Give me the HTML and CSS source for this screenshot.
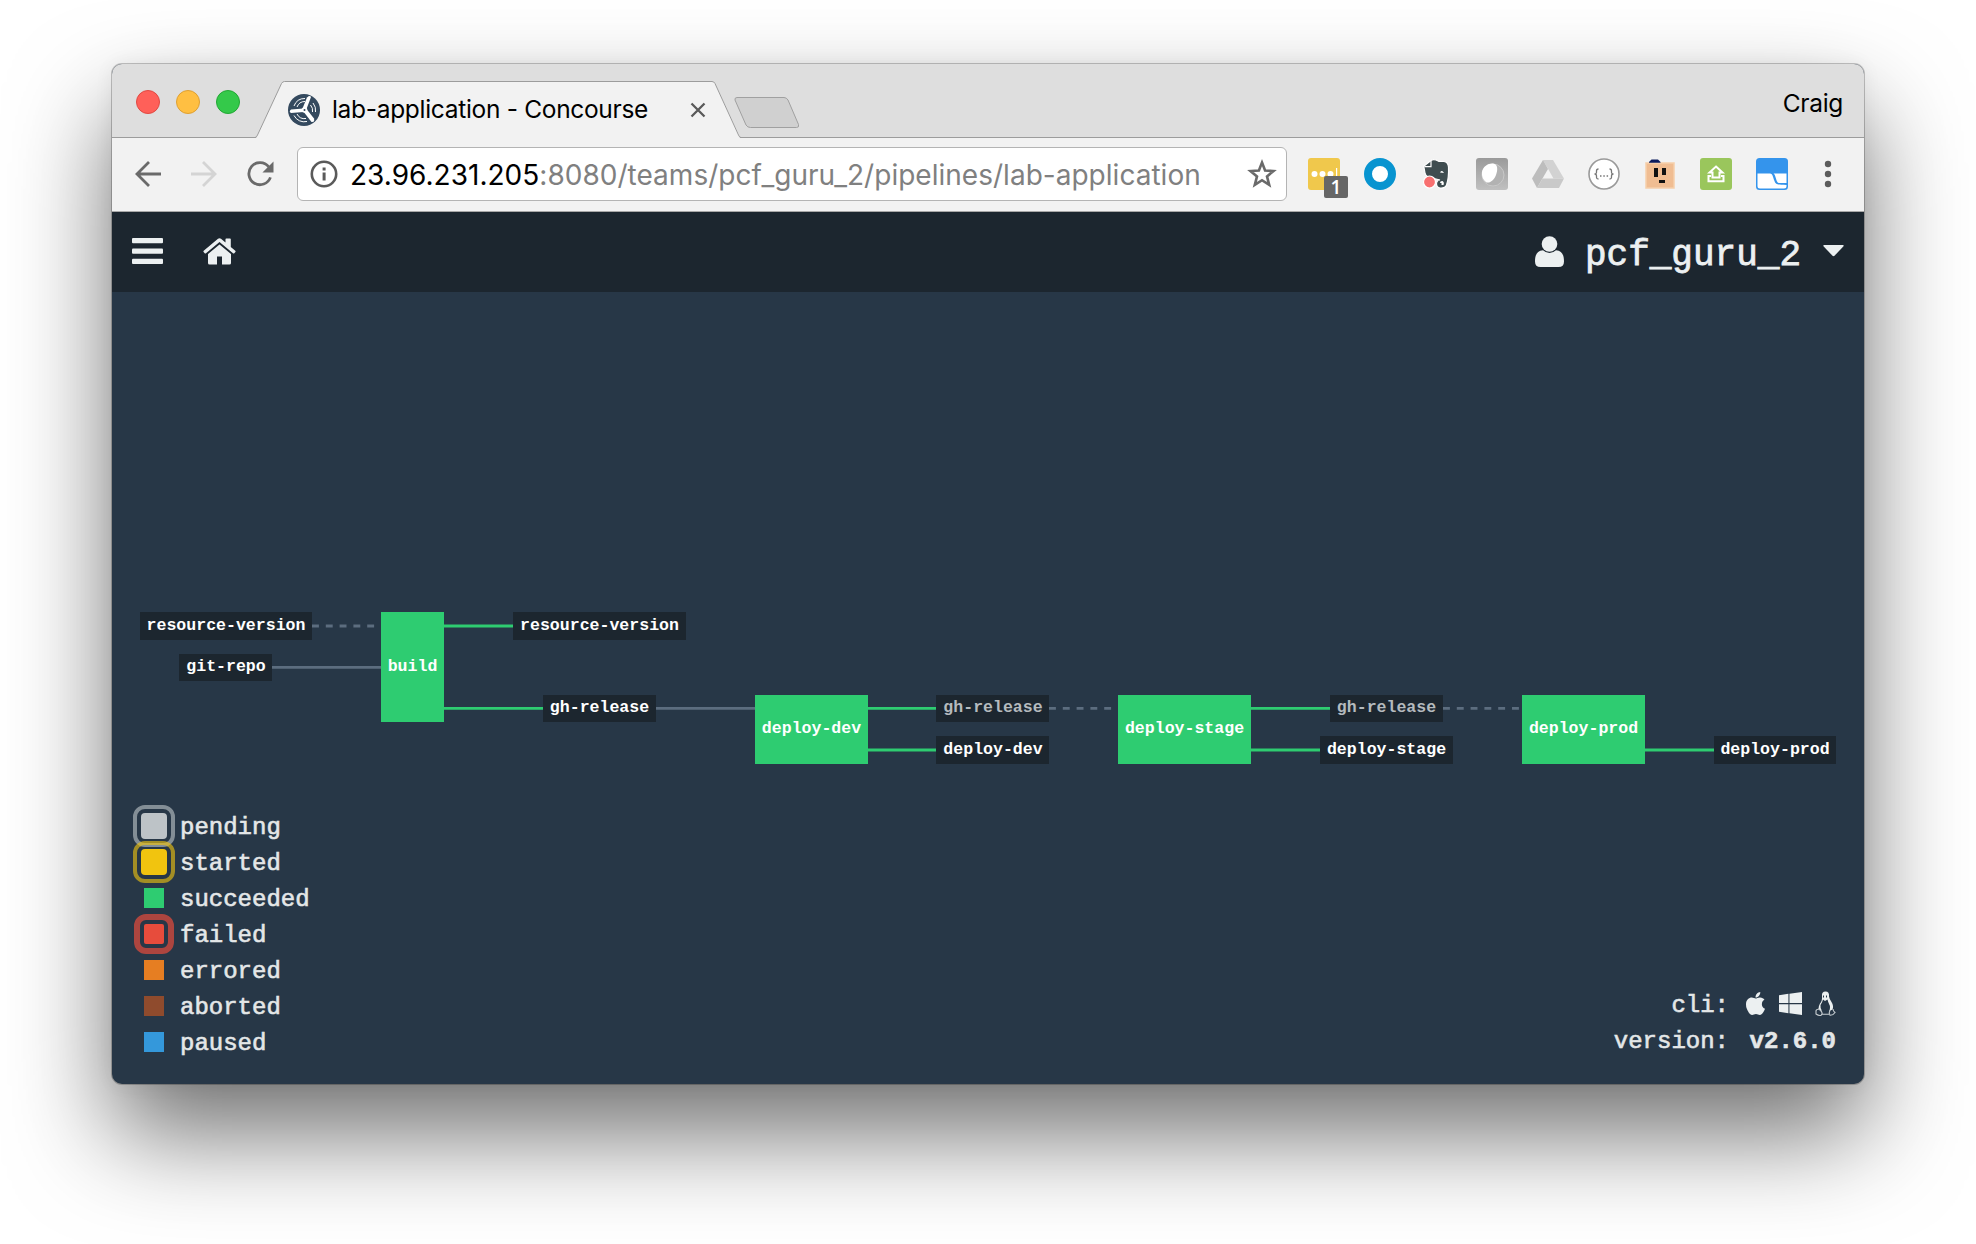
FILE: index.html
```html
<!DOCTYPE html>
<html lang="en">
<head>
<meta charset="utf-8">
<title>lab-application - Concourse</title>
<link rel="stylesheet" href="styles.css">
</head>
<body>
<main class="window">
  <header class="titlebar">
    <div class="lights"><i class="light close"></i><i class="light min"></i><i class="light max"></i></div>
    <div class="tab">
      <svg class="tab-shape" width="484" height="57" viewBox="0 0 484 57"><path d="M0 57L1 54.500 25.500 2.500Q26.500.500 28.500.500H456Q458 .500 459 2.500L483.500 55 484 57Z" fill="#f2f2f2"/><path d="M-1 56.500Q.500 56.500 1.500 54L25.500 2.500Q26.500.500 28.500.500H456Q458 .500 459 2.500L482.500 54Q483.500 56.500 485 56.500" fill="none" stroke="#9c9c9c"/></svg>
      <svg class="favicon" width="32" height="32" viewBox="0 0 32 32"><circle cx="16" cy="16" r="16" fill="#34495e"/><g fill="none" stroke="#fff" stroke-width="1"><path d="M6 12A11.500 11.500 0 0 1 17 4.500M9 13A8.500 8.500 0 0 1 17 7.500M25 9A11.500 11.500 0 0 1 27.500 18M22.500 11A8.500 8.500 0 0 1 24.500 18M19 27.500A11.500 11.500 0 0 1 6 21.500M18 24.500A8.500 8.500 0 0 1 9 20"/></g><g fill="#fff"><path d="M14.500 14.500L19 3.500Q22 .800 23 3L18.500 15Z"/><path d="M15.500 14.500L3 15.500Q.500 17.500 3 19L15.500 18Z"/><path d="M18.500 15L26 24.500Q27 28.500 23.500 28L15.800 18Z"/><circle cx="16.500" cy="16" r="2.800"/></g><circle cx="16.500" cy="16" r="1" fill="#34495e"/></svg>
      <span class="tab-title">lab-application - Concourse</span>
      <svg class="tab-close" width="14" height="14" viewBox="0 0 14 14"><path d="M.500.500L13.500 13.500M13.500.500L.500 13.500" stroke="#5a5a5a" stroke-width="2.300"/></svg>
    </div>
    <svg class="newtab" width="66" height="32" viewBox="0 0 66 32"><path d="M3 .500H50Q52.500.500 54 3L64.500 27.500Q65.500 30.500 62.500 30.500H16.500Q13.500 30.500 12 28L1 3Q.500.500 3 .500Z" fill="#d0d0d0" stroke="#a0a0a0"/></svg>
    <span class="profile">Craig</span>
  </header>
  <div class="toolbar">
    <div class="history">
      <svg width="26" height="26" viewBox="0 0 26 26" fill="none" stroke="#6a6a6a" stroke-width="2.800"><path d="M26 13H2M14 1L2 13L14 25"/></svg>
      <svg width="26" height="26" viewBox="0 0 26 26" fill="none" stroke="#d4d4d4" stroke-width="2.800"><path d="M0 13H24M12 1L24 13L12 25"/></svg>
      <svg width="27" height="26" viewBox="0 0 28 26"><path d="M22.500 5.500A11.500 11.500 0 1 0 24.300 16.500" fill="none" stroke="#6a6a6a" stroke-width="2.900"/><path d="M27.500 0V11.500H16Z" fill="#6a6a6a"/></svg>
    </div>
    <div class="omnibox">
      <svg width="28" height="28" viewBox="0 0 28 28"><circle cx="14" cy="14" r="12.200" fill="none" stroke="#5a5a5a" stroke-width="2.600"/><path d="M12.600 7.500h3v3h-3zM12.600 12.500h3v8h-3z" fill="#5a5a5a"/></svg>
      <span class="url"><b>23.96.231.205</b>:8080/teams/pcf_guru_2/pipelines/lab-application</span>
      <svg width="30" height="30" viewBox="0 0 30 30"><path d="M15 3.500L18.100 11.500 26.500 12 20 17.400 22.200 25.800 15 21.200 7.800 25.800 10 17.400 3.500 12 11.900 11.500Z" fill="none" stroke="#6a6a6a" stroke-width="2.600"/></svg>
    </div>
    <div class="extensions">
      <span class="ext-badged"><svg width="32" height="32" viewBox="0 0 32 32"><rect width="32" height="32" rx="3" fill="#f0c84c"/><g fill="#fff"><circle cx="6.500" cy="16" r="3"/><circle cx="14.500" cy="16" r="3"/><circle cx="22.500" cy="16" r="3"/><path d="M28 10h1.200v12H28z"/></g></svg><em class="badge">1</em></span>
      <svg width="32" height="32" viewBox="0 0 32 32"><circle cx="16" cy="16" r="12" fill="#fff" stroke="#0894d0" stroke-width="8"/></svg>
      <svg width="32" height="32" viewBox="0 0 32 32"><path d="M11 2.500Q13 1 16 2L19 3.500H24Q28 4 28.500 9Q29 20 26.500 27Q25 30.500 20 30Q16.500 29.500 16.500 25.500Q17 22 20 22L14 20.500Q6 20 5 15L4 9.500V8Z" fill="#3f4d50" stroke="#fff" stroke-width="1.200"/><path d="M4.500 8.700H11V2.500" fill="none" stroke="#fff" stroke-width="1.200"/><path d="M20 25Q20 22.800 22.500 23Q24.500 24 23.500 27H21.500V25Z" fill="#fff"/><path d="M20 14.500Q22 11.500 24 15Z" fill="#fff"/><circle cx="9.500" cy="24" r="6" fill="#f87070" stroke="#fff" stroke-width="1.200"/></svg>
      <svg width="32" height="32" viewBox="0 0 32 32"><defs><linearGradient id="g" x2="0" y2="1"><stop stop-color="#9a9a9a"/><stop offset="1" stop-color="#c0c0c0"/></linearGradient></defs><rect width="32" height="32" rx="3" fill="url(#g)"/><circle cx="17" cy="17" r="11" fill="#b2b2b2" stroke="#c8c8c8"/><path d="M6 17C5 10 11 5 17 5.500C22 6 22 12 20 17C17.500 23 14 25 10.500 24.500Q6.500 22 6 17Z" fill="#fff"/></svg>
      <svg width="32" height="32" viewBox="0 0 32 32"><path d="M11 2H21L32 20.500H21.500Z" fill="#d2d2d2"/><path d="M11 2L0 20.500 5 30 16 11Z" fill="#bdbdbd"/><path d="M10.500 20.500H32L27 30H5Z" fill="#c9c9c9"/></svg>
      <svg width="32" height="32" viewBox="0 0 32 32"><circle cx="16" cy="16" r="15" fill="#fff" stroke="#9a9a9a" stroke-width="1.600"/><path d="M10.500 11Q8.500 11 8.500 13V14.500Q8.500 16 6.500 16Q8.500 16 8.500 18V19.500Q8.500 21 10.500 21M21.500 11Q23.500 11 23.500 13V14.500Q23.500 16 25.500 16Q23.500 16 23.500 18V19.500Q23.500 21 21.500 21M12 18h1.500M15.300 18h1.500M18.600 18h1.500" fill="none" stroke="#777" stroke-width="1.300"/></svg>
      <svg width="32" height="32" viewBox="0 0 32 32"><rect x="2" y="5" width="28" height="25" fill="#f0bd92" stroke="#f6cfaa" stroke-width="1.500"/><path d="M5 4L7.500 1.500H14L16.500 4V4.800H5Z" fill="#0a1a5c"/><path d="M10 10h4v9h-4zM18 10h4v7h-4zM15 22h6v3h-6z" fill="#111"/></svg>
      <svg width="32" height="32" viewBox="0 0 32 32"><rect width="32" height="32" rx="3" fill="#9ac65c"/><path d="M16 8.500L22.500 14.500H19.500V19.500H12.500V14.500H9.500Z" fill="none" stroke="#fff" stroke-width="2"/><path d="M11 18H8.500V23.200H23.500V18H21" fill="none" stroke="#fff" stroke-width="2"/></svg>
      <svg width="32" height="32" viewBox="0 0 32 32"><rect width="32" height="32" rx="3.500" fill="#3494ec"/><path d="M1.500 15.500H14C17 15.500 17 20 18.500 23C19.500 26 21 27 30.500 27V28Q30.500 30.500 28 30.500H4Q1.500 30.500 1.500 28Z" fill="#fff"/><path d="M17.500 15.500H30.500V25H23C20 25 20 17 17.500 15.500Z" fill="#fff"/></svg>
      <svg class="menu" width="8" height="28" viewBox="0 0 8 28" fill="#5c5c5c"><circle cx="4" cy="4" r="3.200"/><circle cx="4" cy="14" r="3.200"/><circle cx="4" cy="24" r="3.200"/></svg>
    </div>
  </div>
  <nav class="nav">
    <svg width="31" height="26" viewBox="0 0 31 26" fill="#ecf0f1"><rect width="31" height="5.300" rx="1"/><rect y="10.400" width="31" height="5.300" rx="1"/><rect y="20.700" width="31" height="5.300" rx="1"/></svg>
    <svg class="home" width="33" height="27" viewBox="0 0 33 27" fill="#ecf0f1"><path d="M16.500 6.500L5 16V25Q5 26.500 6.500 26.500H14V18.500H19V26.500H26.500Q28 26.500 28 25V16Z"/><path d="M15 .700Q16.500-.400 18 .700L22.500 4.500V1.300Q22.500.500 23.300.500H27Q27.800.500 27.800 1.300V9L32.300 12.800Q33 13.500 32.400 14.100L31.300 15.300Q30.700 15.900 30 15.300L16.500 4 3 15.300Q2.300 15.900 1.700 15.300L.600 14.100Q0 13.500.700 12.800Z"/></svg>
    <div class="user">
      <svg width="29" height="31" viewBox="0 0 29 31" fill="#ecf0f1"><path d="M8 14.200Q14.500 20 21 14.200C27 14.500 29 19 29 25.500Q29 31 23.500 31H5.500Q0 31 0 25.500C0 19 2 14.500 8 14.200Z"/><circle cx="14.500" cy="8" r="7.800"/></svg>
      <span class="team">pcf_guru_2</span>
      <svg width="21" height="12" viewBox="0 0 21 12"><path d="M1 0H20Q21.200.300 20.300 1.500L11.500 10.800Q10.500 11.700 9.500 10.800L.700 1.500Q-.200.300 1 0Z" fill="#ecf0f1"/></svg>
    </div>
  </nav>
  <section class="board">
    <svg class="pipeline" width="1752" height="500" viewBox="112 292 1752 500">
      <g class="edge"><path class="idle" d="M312 626H381"/><path d="M272 667.300H381M656 708.300H755"/><path class="idle" d="M1049 708.300H1118M1443 708.300H1522"/></g>
      <path class="edge done" d="M444 626H513M444 708.300H543M868 708.300H936M868 750H936M1251 708.300H1330M1251 750H1320M1645 750H1714"/>
      <g class="resource">
        <rect x="140" y="612" width="172" height="28"/><rect x="179" y="654" width="93" height="27"/><rect x="513" y="612" width="173" height="28"/><rect x="543" y="695" width="113" height="27"/><rect x="936" y="695" width="113" height="27"/><rect x="936" y="736" width="113" height="28"/><rect x="1330" y="695" width="113" height="27"/><rect x="1320" y="736" width="133" height="28"/><rect x="1714" y="736" width="122" height="28"/>
      </g>
      <g class="job"><rect x="381" y="612" width="63" height="110"/><rect x="755" y="695" width="113" height="69"/><rect x="1118" y="695" width="133" height="69"/><rect x="1522" y="695" width="123" height="69"/></g>
      <g class="label">
        <text x="226" y="630">resource-version</text><text x="226" y="671">git-repo</text><text x="599.500" y="630">resource-version</text><text x="599.500" y="712">gh-release</text>
        <text class="dim" x="993" y="712">gh-release</text><text x="993" y="754">deploy-dev</text><text class="dim" x="1386.500" y="712">gh-release</text><text x="1386.500" y="754">deploy-stage</text><text x="1775" y="754">deploy-prod</text>
        <text x="412.500" y="671">build</text><text x="811.500" y="733">deploy-dev</text><text x="1184.500" y="733">deploy-stage</text><text x="1583.500" y="733">deploy-prod</text>
      </g>
    </svg>
    <footer class="foot">
      <ul class="legend">
        <li><i class="sw pending"></i>pending</li>
        <li><i class="sw started"></i>started</li>
        <li><i class="sw succeeded"></i>succeeded</li>
        <li><i class="sw failed"></i>failed</li>
        <li><i class="sw errored"></i>errored</li>
        <li><i class="sw aborted"></i>aborted</li>
        <li><i class="sw paused"></i>paused</li>
      </ul>
      <div class="info">
        <span>cli:</span>
        <div class="cli">
          <svg width="19" height="23" viewBox="4 32 376 448" preserveAspectRatio="none" fill="#ecf0f1"><path d="M318.700 268.700c-.200-36.700 16.400-64.400 50-84.800-18.800-26.900-47.200-41.700-84.700-44.600-35.500-2.800-74.300 20.700-88.500 20.700-15 0-49.400-19.700-76.400-19.700C63.300 141.200 4 184.800 4 273.500q0 39.300 14.400 81.200c12.800 36.700 59 126.700 107.200 125.200 25.200-.600 43-17.900 75.800-17.900 31.800 0 48.300 17.900 76.400 17.900 48.600-.700 90.400-82.500 102.600-119.300-65.200-30.700-61.700-90-61.700-91.900zm-56.600-164.200c27.300-32.400 24.800-61.900 24-72.500-24.100 1.400-52 16.400-67.900 34.900-17.500 19.800-27.800 44.300-25.600 71.900 26.100 2 49.900-11.400 69.500-34.300z"/></svg>
          <svg width="23" height="23" viewBox="0 32 448 448" fill="#ecf0f1"><path d="M0 93.700l183.600-25.300v177.400H0V93.700zm0 324.600l183.600 25.300V268.400H0v149.900zm203.800 28L448 480V268.400H203.800v177.900zm0-380.600v180.100H448V32L203.800 65.700z"/></svg>
          <svg width="21" height="25" viewBox="0 0 21 25"><path d="M7 5Q6.500.500 10.500.500Q14.500.500 14 5.500Q14.500 8.500 16.500 11Q19 15 17.500 18.500L14.500 20Q15.500 15 14.500 14Q13 11 12.500 8.500L10 10 8 8.500Q7.500 11 5.500 14Q5 17 7 20L3.500 18Q3.500 15 5 12.500Q7.500 9.500 7 5Z" fill="#ecf0f1"/><path d="M8.500 4.500v2M11.500 4.500v2" stroke="#273747"/><path d="M4 18Q.800 18.500 1 20V23Q4 25 6 24.300Q8 23 6.500 20.500ZM15 19Q13.500 22 15 24.300Q18 24.500 20 21.500Q18 20 18 18M7.500 23.300H14" fill="none" stroke="#c8ced2" stroke-width="1.100"/></svg>
        </div>
        <span>version:</span><b>v2.6.0</b>
      </div>
    </footer>
  </section>
</main>
</body>
</html>
```
FILE: styles.css
```css
* { box-sizing: border-box; }
body { margin: 0; width: 1976px; height: 1244px; padding: 64px 112px; overflow: hidden; background: #fff; }
svg { display: block; flex: none; overflow: visible; }
.window { width: 1752px; height: 1020px; display: flex; flex-direction: column; overflow: visible; border-radius: 10px; background: #273747;
  box-shadow: 0 0 0 1px rgba(0,0,0,.22), 0 50px 100px rgba(0,0,0,.56), 0 0 20px rgba(0,0,0,.06); }
.titlebar { height: 74px; flex: none; display: flex; align-items: flex-start; padding-left: 24px; background: #dedede; border-bottom: 1px solid #9c9c9c; border-radius: 10px 10px 0 0; font-family: Inter, sans-serif; color: #000; }
.lights { display: flex; gap: 16px; padding-top: 26px; }
.light { width: 24px; height: 24px; border-radius: 50%; border: 1px solid #e14942; background: #ff6059; }
.light.min { background: #ffbf42; border-color: #dfa032; }
.light.max { background: #34c94a; border-color: #22a834; }
.tab { position: relative; width: 484px; height: 57px; margin: 17px 0 0 16px; display: flex; align-items: center; padding: 0 0 0 32px; }
.tab-shape { position: absolute; left: 0; top: 0; }
.favicon, .tab-title, .tab-close { position: relative; }
.tab-title { margin-left: 12px; width: 359px; padding-bottom: 1px; font-size: 24.500px; letter-spacing: -.31px; white-space: nowrap; }
.newtab { margin: 33px 0 0 -6px; }
.profile { margin: 24px 21px 0 auto; font-size: 24.500px; line-height: 30px; letter-spacing: -.3px; }
.toolbar { height: 74px; flex: none; display: flex; align-items: center; padding-left: 23px; padding-bottom: 1px; background: #f2f2f2; border-bottom: 1px solid #a8a8a8; }
.history { display: flex; gap: 30px; width: 162px; }
.omnibox { width: 990px; height: 54px; display: flex; align-items: center; padding: 0 9px 0 12px; background: #fff; border: 1px solid #b4b4b4; border-radius: 6px; }
.url { flex: 1; margin-left: 12px; padding-top: 2px; font: 28px/50px Inter, sans-serif; letter-spacing: .02px; color: #808080; white-space: nowrap; }
.url b { font-weight: 400; color: #000; }
.extensions { display: flex; align-items: center; gap: 24px; margin-left: 21px; }
.ext-badged { position: relative; }
.badge { position: absolute; left: 16px; top: 18px; width: 24px; height: 22px; border-radius: 2px; background: #666; color: #fff; font: 600 19px/23px "Open Sans", sans-serif; text-align: center; }
.menu { margin-left: 12px; }
.nav { height: 80px; flex: none; display: flex; align-items: center; padding: 0 20px 2px; background: #1c262f; }
.home { margin-left: 40px; }
.user { display: flex; align-items: center; gap: 22px; margin-left: auto; }
.team { margin-left: -1px; padding-top: 10px; font: 36px/60px "Liberation Mono", monospace; color: #ecf0f1; -webkit-text-stroke: .8px #ecf0f1; }
.board { height: 792px; display: flex; flex-direction: column; }
.edge { fill: none; stroke: #5c6d7f; stroke-width: 2.800; }
.idle { stroke-dasharray: 6.900 6.900; }
.done { stroke: #2ecc71; }
.resource { fill: #1c262f; }
.job { fill: #2ecc71; }
.label { font: bold 16.560px "Liberation Mono", monospace; fill: #fff; text-anchor: middle; }
.dim { fill: #b4babe; }
.foot { flex: 1; display: flex; justify-content: space-between; align-items: flex-end; padding: 0 28px 24px 32px; font: 24px/36px "Liberation Mono", monospace; color: #e4e7e8; -webkit-text-stroke: .6px #e4e7e8; }
.legend { list-style: none; margin: 0; padding: 0; }
.legend li { display: flex; align-items: center; gap: 16px; height: 36px; padding-top: 4px; }
.sw { width: 20px; height: 20px; flex: none; margin-top: -4px; }
.pending { background: #bdc3c7; color: rgba(189,195,199,.62); }
.started { background: #f1c40f; color: rgba(241,196,15,.62); }
.pending, .started { width: 26px; height: 26px; margin: -4px -3px 0; border-radius: 4px; outline: 4px solid; outline-offset: 4px; }
.succeeded { background: #2ecc71; }
.failed { background: #e74c3c; border-radius: 2px; outline: 6px solid rgba(231,76,60,.7); outline-offset: 4px; }
.errored { background: #e67e22; }
.aborted { background: #8f4b2d; }
.paused { background: #3498db; }
.info { display: grid; grid-template-columns: auto 90px; grid-auto-rows: 36px; column-gap: 17px; text-align: right; }
.cli { display: flex; align-items: center; justify-content: space-between; padding-bottom: 5px; }
```
